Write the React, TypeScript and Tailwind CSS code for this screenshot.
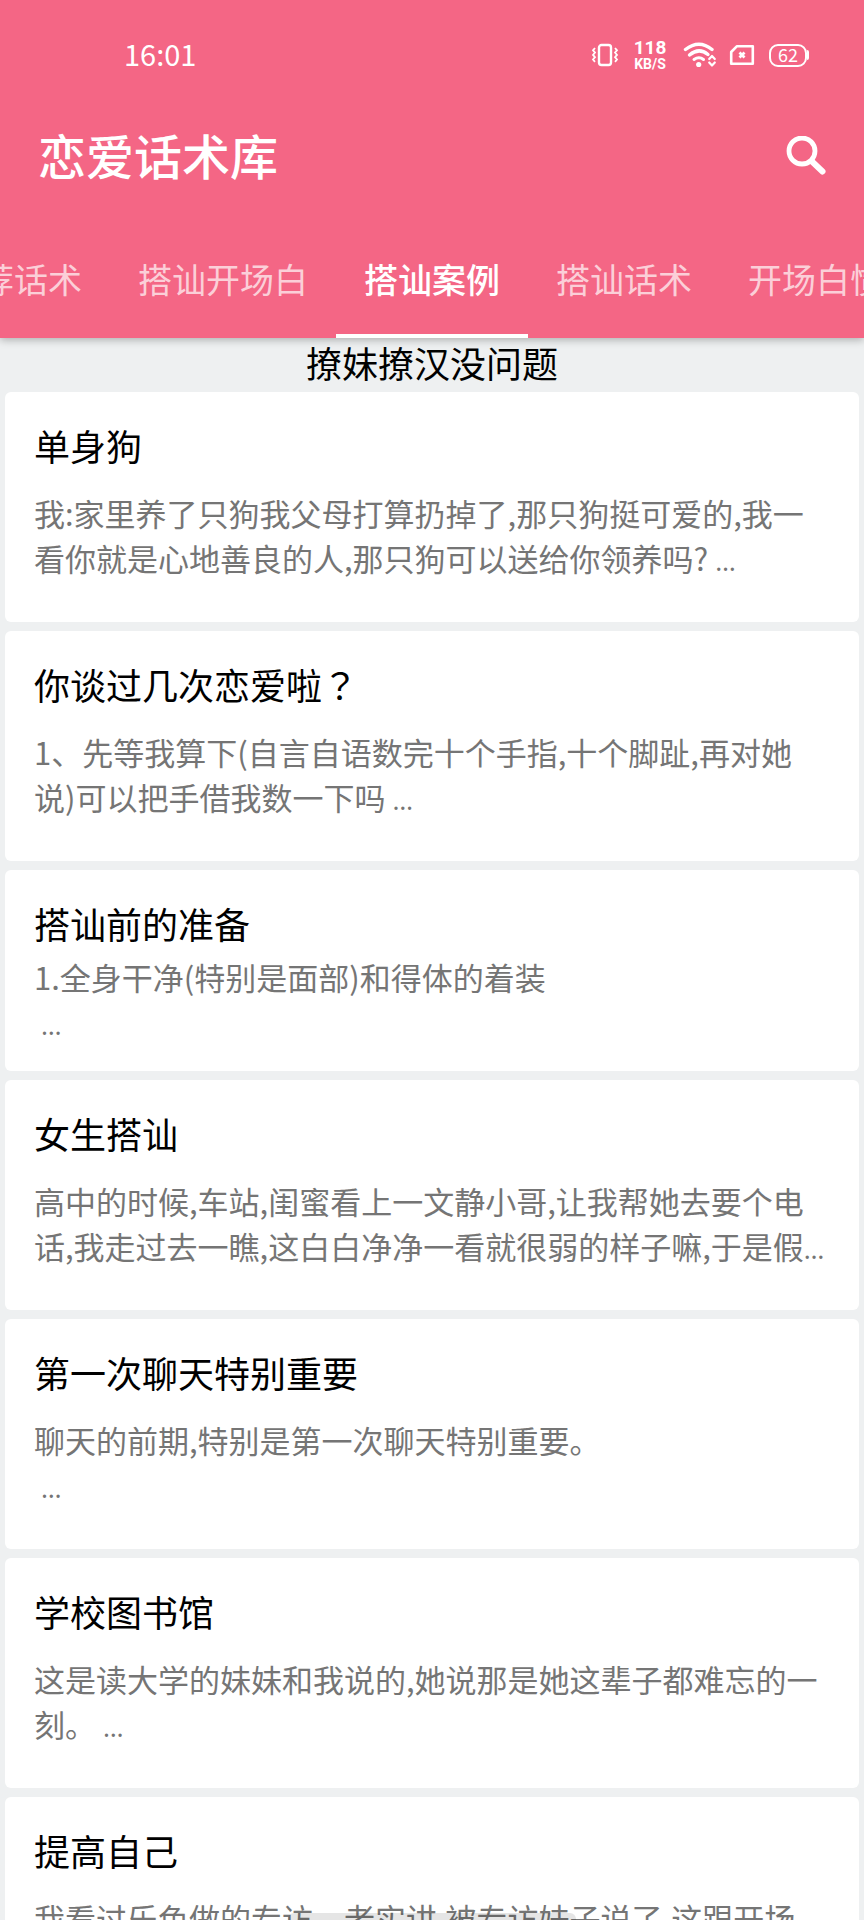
import React from "react";

type Topic = { title: string; lines: string[]; compact?: boolean };

const TABS = ["推荐话术", "搭讪开场白", "搭讪案例", "搭讪话术", "开场白惯例"];
const ACTIVE_TAB = "搭讪案例";

const TOPICS: Topic[] = [
  {
    title: "单身狗",
    lines: [
      "我:家里养了只狗我父母打算扔掉了,那只狗挺可爱的,我一",
      "看你就是心地善良的人,那只狗可以送给你领养吗? …",
    ],
  },
  {
    title: "你谈过几次恋爱啦？",
    lines: [
      "1、先等我算下(自言自语数完十个手指,十个脚趾,再对她",
      "说)可以把手借我数一下吗 …",
    ],
  },
  {
    title: "搭讪前的准备",
    lines: ["1.全身干净(特别是面部)和得体的着装", " …"],
    compact: true,
  },
  {
    title: "女生搭讪",
    lines: [
      "高中的时候,车站,闺蜜看上一文静小哥,让我帮她去要个电",
      "话,我走过去一瞧,这白白净净一看就很弱的样子嘛,于是假…",
    ],
  },
  {
    title: "第一次聊天特别重要",
    lines: ["聊天的前期,特别是第一次聊天特别重要。", " …"],
  },
  {
    title: "学校图书馆",
    lines: ["这是读大学的妹妹和我说的,她说那是她这辈子都难忘的一", "刻。 …"],
  },
  {
    title: "提高自己",
    lines: ["我看过乐色做的专访。老实讲,被专访妹子说了,这跟开场", "白没有关系 …"],
  },
];

function StatusBar() {
  return (
    <div className="flex h-[110px] items-center justify-between pr-[55px] pl-[124px]">
      <time className="pb-1 text-[29px] leading-none">16:01</time>
      <div className="flex items-center">
        <svg className="h-6 w-7" viewBox="0 0 28 24" fill="none" stroke="currentColor" aria-label="振动">
          <rect x="8" y="2" width="12" height="20" rx="2.5" strokeWidth="2.4" />
          <path d="M4 5l-2 2.3 2 2.3-2 2.3 2 2.3-2 2.3 2 2.3M24 5l2 2.3-2 2.3 2 2.3-2 2.3 2 2.3-2 2.3" strokeWidth="1.8" />
        </svg>
        <div className="ml-2.5 flex w-[42px] flex-col items-center pt-0.5 font-['Roboto',sans-serif] font-bold">
          <span className="text-[19px] leading-4">118</span>
          <span className="text-[14px] leading-4">KB/S</span>
        </div>
        <svg className="ml-3 h-[26px] w-[34px]" viewBox="0 0 34 26" fill="none" stroke="currentColor" strokeLinecap="round" aria-label="无线网络">
          <path d="M2.5 7.5Q16 -3 29 7.5" strokeWidth="3.4" />
          <path d="M6.5 13Q16 5 25 12.5" strokeWidth="3.4" />
          <path d="M11 17.5Q16 14 20.5 17.5" strokeWidth="3" />
          <circle cx="15.7" cy="22.5" r="2.6" fill="currentColor" stroke="none" />
          <path d="M26.2 17l2.8-3 2.8 3M26.2 20.5l2.8 3 2.8-3" strokeWidth="2.2" strokeLinejoin="round" />
        </svg>
        <svg className="ml-3 h-[22px] w-[26px]" viewBox="0 0 26 22" fill="none" stroke="currentColor" aria-label="无SIM卡">
          <path d="M8 2.2H23.8V19.8H2.2V8Z" strokeWidth="2.6" strokeLinejoin="round" />
          <path d="M10.5 8.5l5 5M15.5 8.5l-5 5" strokeWidth="2.8" />
        </svg>
        <div className="ml-3.5 flex items-center">
          <span className="flex h-[23px] w-[38px] items-center justify-center rounded-[9px] border-2 border-white pb-0.5 text-[18px] leading-none">
            62
          </span>
          <span className="h-2.5 w-0.5 rounded-r-full bg-white" />
        </div>
      </div>
    </div>
  );
}

function Header() {
  return (
    <header className="relative z-10 bg-[#f46685] text-white shadow-[0_2px_8px_rgba(0,0,0,0.28)]">
      <StatusBar />
      <div className="flex h-[92px] items-center justify-between pr-[38px] pl-[38px]">
        <h1 className="pb-1 text-5xl leading-none font-medium">恋爱话术库</h1>
        <button type="button" aria-label="搜索" className="size-10">
          <svg className="size-10" viewBox="0 0 40 40" fill="none" stroke="currentColor" aria-hidden="true">
            <circle cx="16" cy="15" r="13" strokeWidth="4.8" />
            <path d="M26 25.5L36.5 35.5" strokeWidth="6" strokeLinecap="round" />
          </svg>
        </button>
      </div>
      <nav className="flex h-[136px] justify-center overflow-hidden">
        {TABS.map((tab) => (
          <a
            key={tab}
            href="#"
            aria-current={tab === ACTIVE_TAB ? "page" : undefined}
            className={
              tab === ACTIVE_TAB
                ? "flex shrink-0 items-center border-b-4 border-white px-7 pt-6 pb-0.5 text-[34px] leading-none font-medium"
                : "flex shrink-0 items-center border-b-4 border-transparent px-7 pt-6 pb-0.5 text-[34px] leading-none text-white/70"
            }
          >
            {tab}
          </a>
        ))}
      </nav>
    </header>
  );
}

function TopicTitle({ text }: { text: string }) {
  const question = text.endsWith("？");
  return (
    <h2 className="text-4xl leading-[50px] text-black">
      {question ? text.slice(0, -1) : text}
      {question && <span lang="ja" className="font-['Noto_Sans_CJK_JP',sans-serif]">？</span>}
    </h2>
  );
}

function BodyLine({ text }: { text: string }) {
  const [body, rest] = text.split("…");
  return (
    <span className="block h-[45px] whitespace-pre">
      {body}
      {rest !== undefined && <span className="font-['Noto_Sans',sans-serif] text-[26px] leading-none">…</span>}
    </span>
  );
}

function TopicCard({ topic }: { topic: Topic }) {
  return (
    <article
      className={
        topic.compact
          ? "overflow-hidden rounded-md bg-white px-[29px] pt-7 pb-[27px]"
          : "overflow-hidden rounded-md bg-white px-[29px] pt-7 pb-[42px]"
      }
    >
      <TopicTitle text={topic.title} />
      <p
        className={
          topic.compact
            ? "mt-1.5 text-[31px] leading-[45px] text-[#757575]"
            : "mt-5 text-[31px] leading-[45px] text-[#757575]"
        }
      >
        {topic.lines.map((line) => (
          <BodyLine key={line} text={line} />
        ))}
      </p>
    </article>
  );
}

export default function App() {
  return (
    <div className="relative flex h-screen flex-col overflow-hidden bg-[#eef0f1] font-['Noto_Sans_CJK_SC',sans-serif]">
      <Header />
      <main className="min-h-0 flex-1 overflow-hidden">
        <p className="pb-1.5 text-center text-4xl leading-[48px] text-black">撩妹撩汉没问题</p>
        <div className="flex flex-col gap-[9px] px-[5px]">
          {TOPICS.map((topic) => (
            <TopicCard key={topic.title} topic={topic} />
          ))}
        </div>
      </main>
      <div className="absolute bottom-0 left-1/3 h-[7px] w-1/3 rounded-t-md bg-black/10" />
    </div>
  );
}
